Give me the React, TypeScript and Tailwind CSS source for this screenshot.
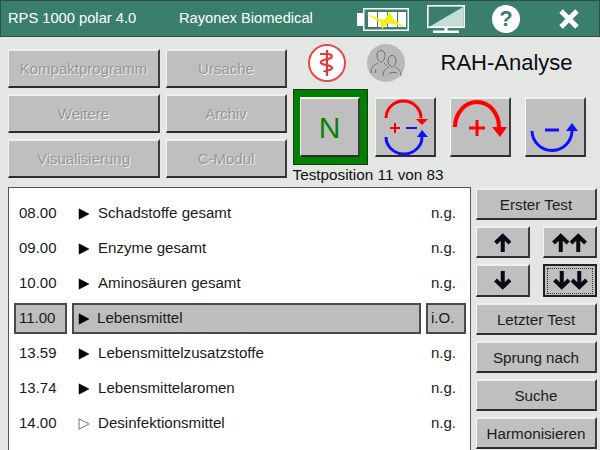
import type { ReactNode } from "react";

const font = "font-['Liberation_Sans',Arial,sans-serif]";
const bevel =
  "flex items-center justify-center bg-[#bfbfbf] border-t-2 border-l border-r-2 border-b-2 border-t-[#eff0ee] border-l-[#f4f5f3] border-r-[#3c3c3c] border-b-[#2e2e2e]";

function MenuButton({ label }: { label: string }) {
  return (
    <div className={`${bevel} h-[39px] pt-[2px] text-[15px] text-[#979797] [text-shadow:1px_1px_0_#ececec]`}>
      {label}
    </div>
  );
}

function SideButton({ label, className }: { label: string; className: string }) {
  return <div className={`${bevel} ${className} pt-[2px] text-[15.2px] text-[#1c1c1c]`}>{label}</div>;
}

function Arrows({ count, down }: { count: number; down?: boolean }) {
  return (
    <svg width={count * 17.5} height="19" viewBox={`0 0 ${count * 17.5} 19`}>
      {Array.from({ length: count }).map((_, i) => (
        <g key={i} transform={`translate(${i * 17.5} 0) ${down ? "translate(0 19) scale(1 -1)" : ""}`}>
          <path d="M8.75 19 V3 M1.5 10 L8.75 3 L16 10" fill="none" stroke="#0a0a14" strokeWidth="4" />
        </g>
      ))}
    </svg>
  );
}

function Row({ time, label, open, status, selected }: { time: string; label: string; open?: boolean; status: string; selected?: boolean }) {
  const box = selected ? "bg-[#bdbdbd] border-2 border-[#4a4a4a]" : "border-2 border-transparent";
  return (
    <div className="grid h-[35px] grid-cols-[53px_349px_40px] items-center gap-x-[5px] text-[15px] text-[#1a1a1a]">
      <div className={`${box} flex h-[31px] items-center pl-[3px]`}>{time}</div>
      <div className={`${box} flex h-[31px] items-center`}>
        <svg width="12" height="12" viewBox="0 0 12 12" className="ml-[4px] shrink-0">
          <path
            d="M1 0.8 L11 6 L1 11.2 Z"
            fill={open ? "none" : "#050505"}
            stroke={open ? "#777" : "#050505"}
            strokeWidth={open ? 1 : 0.5}
          />
        </svg>
        <span className={`text-[15.1px] ${selected ? "ml-[7px]" : "ml-[8px]"}`}>{label}</span>
      </div>
      <div className={`${box} flex h-[31px] items-center pl-[3px]`}>{status}</div>
    </div>
  );
}

function RoundIcon({ className, children }: { className: string; children: ReactNode }) {
  return <div className={`flex h-[38px] w-[38px] items-center justify-center rounded-full ${className}`}>{children}</div>;
}

export default function App() {
  return (
    <div className={`${font} flex h-[450px] w-[600px] flex-col overflow-hidden bg-[#e4e6e3]`}>
      <header className="flex h-[37px] shrink-0 items-center border border-[#2f4f47] bg-[#3a7f6b] text-[14.7px] text-white">
        <span className="ml-[7px] w-[171px]">RPS 1000 polar 4.0</span>
        <span className="w-[178px]">Rayonex Biomedical</span>
        <svg width="52" height="24" viewBox="0 0 52 24" className="mt-[3px]">
          <rect x="0" y="5" width="6" height="13" fill="#fff" />
          <rect x="6.75" y="0.75" width="44.5" height="21.5" fill="none" stroke="#fff" strokeWidth="1.5" />
          <rect x="11" y="4" width="9" height="15" fill="#fff" />
          <rect x="21" y="4" width="9" height="15" fill="#fff" />
          <rect x="31" y="4" width="9" height="15" fill="#fff" />
          <rect x="41" y="4" width="8" height="15" fill="#fff" />
          <path d="M9 6 L27 12 L33 4 L37 12 L48 19 L31 15 L25 21 L23 14 Z" fill="#f6ee10" />
        </svg>
        <svg width="38" height="28" viewBox="0 0 38 28" className="ml-[18px]">
          <path d="M2 22 L36 2 V22 Z" fill="#c6dcd6" />
          <rect x="0.8" y="0.8" width="36.4" height="21.5" fill="none" stroke="#fff" strokeWidth="1.6" />
          <rect x="17.5" y="23" width="3" height="3" fill="#fff" />
          <rect x="6" y="25.5" width="26" height="2.5" fill="#fff" />
        </svg>
        <div className="ml-[27px] flex h-[28px] w-[28px] items-center justify-center rounded-full bg-white text-[22px] font-bold text-[#3a7f6b]">?</div>
        <svg width="22" height="22" viewBox="0 0 22 22" className="ml-[38px]">
          <path d="M3 3 L19 19 M19 3 L3 19" stroke="#fff" strokeWidth="5" />
        </svg>
      </header>

      <div className="flex h-[150px] shrink-0 pl-[8px]">
        <div className="mt-[12px] grid h-[129px] w-[279px] grid-cols-[152px_121px] gap-x-[6px] gap-y-[6px]">
          <MenuButton label="Kompaktprogramm" />
          <MenuButton label="Ursache" />
          <MenuButton label="Weitere" />
          <MenuButton label="Archiv" />
          <MenuButton label="Visualisierung" />
          <MenuButton label="C-Modul" />
        </div>
        <div className="ml-[5.5px] flex flex-col">
          <div className="flex h-[52px] items-center pl-[15px]">
            <RoundIcon className="border-2 border-[#e2484c] bg-white">
              <svg width="20" height="28" viewBox="0 0 20 28" fill="none" stroke="#e23a3f" strokeWidth="2.2">
                <path d="M10 1 V27" />
                <path d="M3 5 H11 C16 5 16 9 11 10 C6 11 3 12 4 14 C5 16 15 16 15 19 C15 22 7 21 7 23" />
              </svg>
            </RoundIcon>
            <RoundIcon className="ml-[21px] bg-[#b9b9b9]">
              <svg width="32" height="30" viewBox="0 0 32 30" fill="none" stroke="#6e6e6e" strokeWidth="1">
                <path d="M7 7 C7 1 15 1 15 7 C15 11 13 14 11 14 C9 14 7 11 7 7 Z" />
                <path d="M18 12 C18 6 26 6 26 12 C26 16 24 19 22 19 C20 19 18 16 18 12 Z" />
                <path d="M1 25 C1 19 4 17 8 15 M14 15 C15 16 16 17 17 18 M5 25 L6 21" />
                <path d="M13 28 C13 23 15 21 19 19 M25 19 C29 21 31 23 31 28 M19 26 C21 24 24 24 27 25" />
              </svg>
            </RoundIcon>
            <span className="ml-[36px] text-[22px] leading-none text-[#0c0c14]">RAH-Analyse</span>
          </div>
          <div className="flex">
            <div className="flex h-[76px] w-[75px] items-center justify-center border border-[#1a3a1a] bg-[#008000]">
              <div className={`${bevel} h-[60px] w-[60px] text-[30px] text-[#0a800a]`}>N</div>
            </div>
            <div className="ml-[7px] mt-[8px] flex gap-x-[14px]">
              <div className={`${bevel} h-[60px] w-[61px]`}>
                <svg width="57" height="56" viewBox="377 99 57 56" fill="none" className="shrink-0">
                  <path d="M387 118 A17.5 17 0 0 1 422 118" stroke="#ff0000" strokeWidth="3" />
                  <path d="M417 119 H429 L423 125 Z" fill="#ff0000" />
                  <path d="M396 123 V133 M391 128 H401" stroke="#ff0000" strokeWidth="2" />
                  <path d="M407 128 H418" stroke="#1010ff" strokeWidth="2" />
                  <path d="M387 137 A18 17 0 0 0 423 137" stroke="#1010ff" strokeWidth="3" />
                  <path d="M418 137 H429 L423 130 Z" fill="#1010ff" />
                </svg>
              </div>
              <div className={`${bevel} h-[60px] w-[61px]`}>
                <svg width="57" height="56" viewBox="452 99 57 56" fill="none" className="shrink-0">
                  <path d="M456 127 A22 25 0 0 1 500 127" stroke="#ff0000" strokeWidth="4" />
                  <path d="M493 127 H508 L501 137 Z" fill="#ff0000" />
                  <path d="M478 120 V136 M470 128 H486" stroke="#ff0000" strokeWidth="3" />
                </svg>
              </div>
              <div className={`${bevel} h-[60px] w-[61px]`}>
                <svg width="57" height="56" viewBox="527 99 57 56" fill="none" className="shrink-0">
                  <path d="M533 131 A20 20 0 0 0 573 130" stroke="#1010ff" strokeWidth="3" />
                  <path d="M567 131 H579 L573 123 Z" fill="#1010ff" />
                  <path d="M546 130 H560" stroke="#1010ff" strokeWidth="3" />
                </svg>
              </div>
            </div>
          </div>
          <div className="mt-[1px] text-[15.3px] leading-[18px] text-[#111]">Testposition 11 von 83</div>
        </div>
      </div>

      <div className="flex min-h-0 flex-1 pl-[8px]">
        <div className="h-[270px] w-[463px] border border-[#555] bg-white pl-[5px] pt-[8px]">
          <Row time="08.00" label="Schadstoffe gesamt" status="n.g." />
          <Row time="09.00" label="Enzyme gesamt" status="n.g." />
          <Row time="10.00" label="Aminosäuren gesamt" status="n.g." />
          <Row time="11.00" label="Lebensmittel" status="i.O." selected />
          <Row time="13.59" label="Lebensmittelzusatzstoffe" status="n.g." />
          <Row time="13.74" label="Lebensmittelaromen" status="n.g." />
          <Row time="14.00" label="Desinfektionsmittel" open status="n.g." />
        </div>
        <div className="ml-[5px] flex w-[121px] flex-col pt-[1px]">
          <SideButton label="Erster Test" className="h-[32px]" />
          <div className="mt-[6px] grid grid-cols-[54px_54px] justify-between gap-y-[6px]">
            <div className={`${bevel} h-[32px]`}><Arrows count={1} /></div>
            <div className={`${bevel} h-[32px]`}><Arrows count={2} /></div>
            <div className={`${bevel} h-[33px]`}><Arrows count={1} down /></div>
            <div className="flex h-[33px] items-center justify-center border-2 border-[#222] bg-[#bfbfbf]">
              <div className="flex h-[26px] w-[46px] items-center justify-center border border-dotted border-[#333]">
                <Arrows count={2} down />
              </div>
            </div>
          </div>
          <SideButton label="Letzter Test" className="mt-[6px] h-[32px]" />
          <SideButton label="Sprung nach" className="mt-[6px] h-[32px]" />
          <SideButton label="Suche" className="mt-[6px] h-[32px]" />
          <SideButton label="Harmonisieren" className="mt-[6px] h-[32px]" />
        </div>
      </div>
    </div>
  );
}
